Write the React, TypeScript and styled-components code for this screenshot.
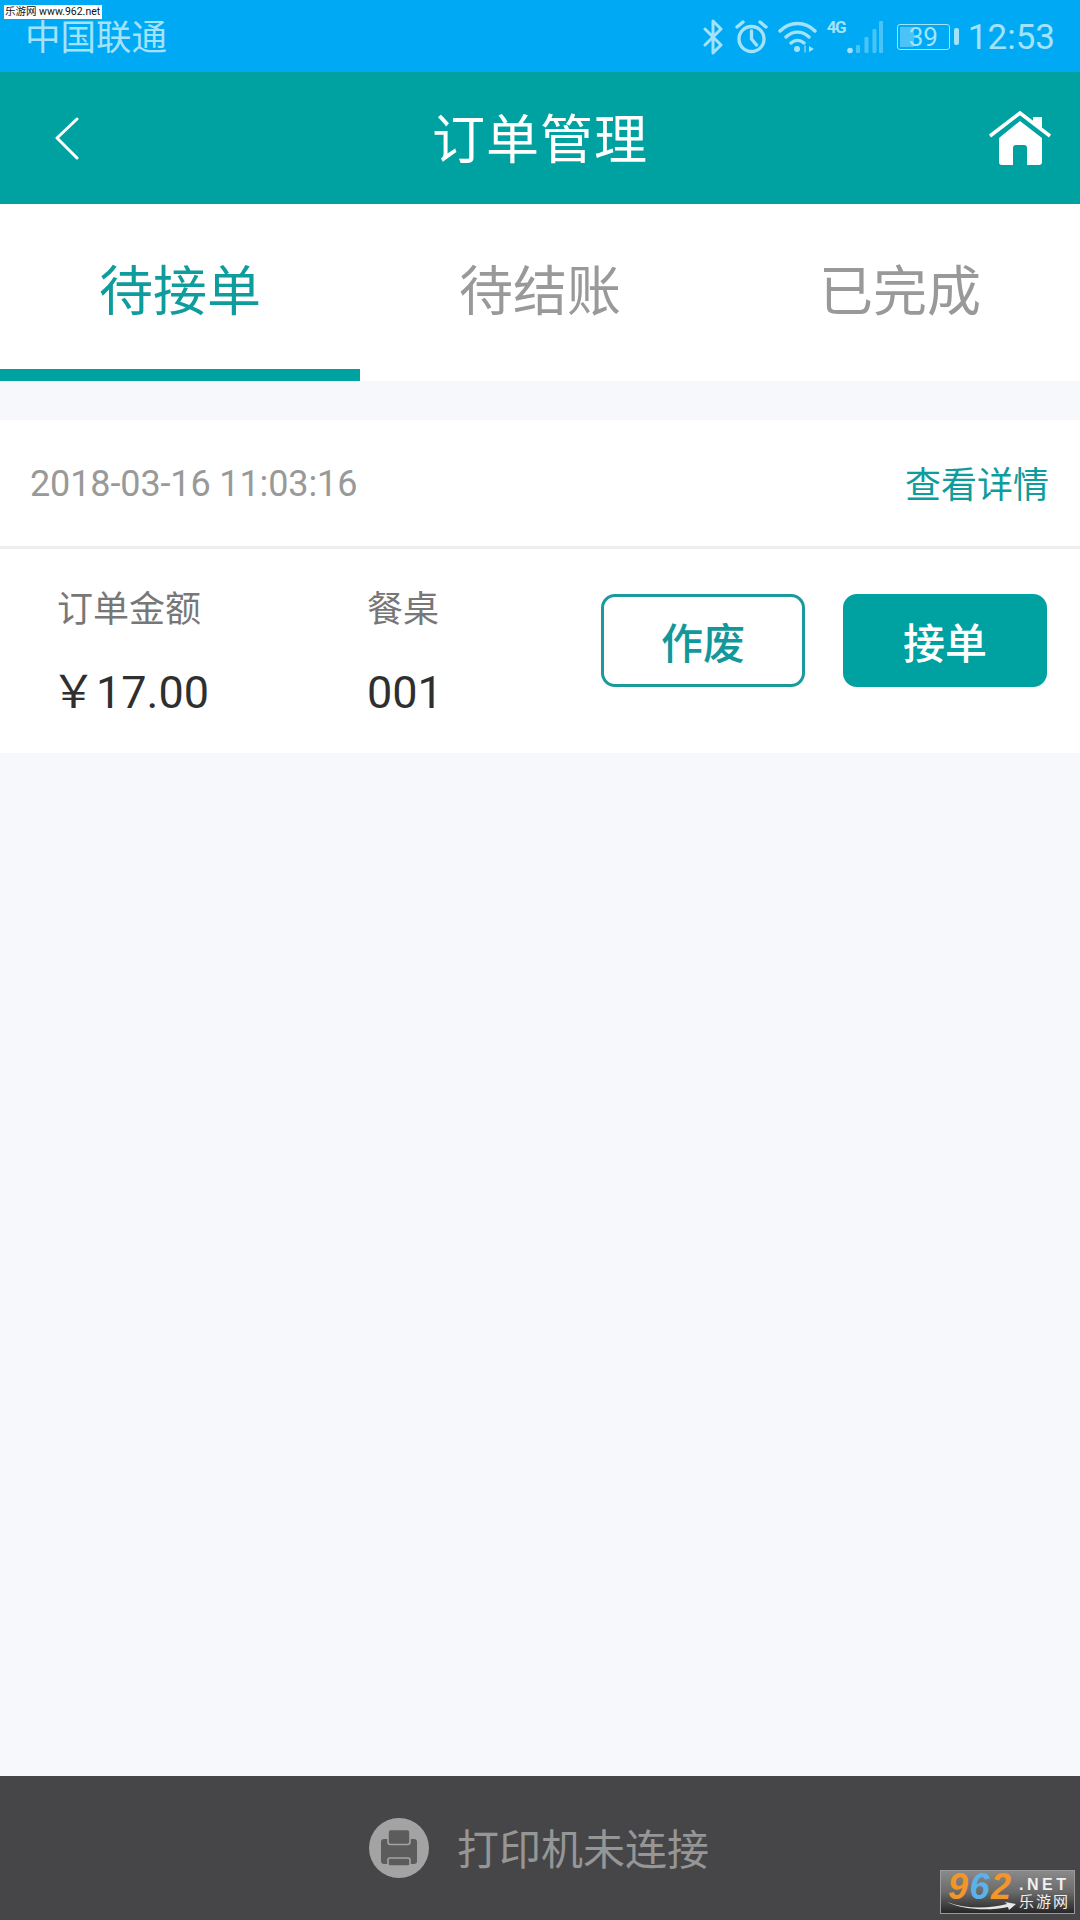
import React from 'react'
import styled, { createGlobalStyle } from 'styled-components'

const TEAL = '#00a1a1'
const STATUS = '#a3e2fb'
const FONT = `Roboto, 'Noto Sans CJK SC', sans-serif`

const GlobalStyle = createGlobalStyle`
  html, body {
    margin: 0;
    padding: 0;
    background: #f6f8fc;
    font-family: ${FONT};
  }
  * { box-sizing: border-box; }
`

const Page = styled.div`
  position: relative;
  display: flex;
  flex-direction: column;
  width: 1080px;
  height: 1920px;
  overflow: hidden;
  background: #f6f8fc;
`

const StatusBar = styled.div`
  display: flex;
  align-items: center;
  justify-content: space-between;
  height: 72px;
  padding: 2px 25px 0 25px;
  background: #00a9f4;
  color: ${STATUS};
`

const Carrier = styled.span`
  padding-top: 3px;
  font-size: 35.5px;
  line-height: 1;
`

const StatusIcons = styled.div`
  display: flex;
  align-items: center;
`

const StatusIcon = styled.svg<{ $gap: number }>`
  display: block;
  margin-right: ${({ $gap }) => $gap}px;
  fill: none;
  stroke: ${STATUS};
`

const NetworkWrap = styled.div`
  position: relative;
  width: 56px;
  height: 36px;
  margin-right: 14px;
`

const NetworkLabel = styled.span`
  position: absolute;
  top: 1px;
  left: 0;
  font-size: 17px;
  font-weight: 700;
  line-height: 14px;
  letter-spacing: -1.5px;
  color: ${STATUS};
`

const SignalBars = styled.svg`
  position: absolute;
  top: 0;
  right: 0;
`

const Battery = styled.div`
  position: relative;
  display: flex;
  align-items: center;
  justify-content: center;
  width: 53px;
  height: 26px;
  border: 1.5px solid ${STATUS};
  border-radius: 3px;
  font-size: 26px;
  line-height: 1;
  color: ${STATUS};

  &::before {
    content: '';
    position: absolute;
    top: 2px;
    bottom: 2px;
    left: 2px;
    width: 14px;
    background: rgba(163, 226, 251, 0.45);
  }
  &::after {
    content: '';
    position: absolute;
    top: 3px;
    right: -10px;
    width: 5px;
    height: 17px;
    border-radius: 2px;
    background: ${STATUS};
  }
`

const Clock = styled.span`
  margin-left: 18px;
  font-size: 35px;
  line-height: 1;
`

const Header = styled.header`
  display: grid;
  grid-template-columns: 1fr auto 1fr;
  align-items: center;
  height: 132px;
  padding: 0 28px;
  background: ${TEAL};
  color: #fff;
`

const Title = styled.h1`
  margin: 0;
  padding-top: 6px;
  font-size: 53px;
  font-weight: 400;
  line-height: 1;
  letter-spacing: 1px;
`

const BackIcon = styled.svg`
  display: block;
  margin-left: 26px;
  fill: none;
  stroke: #fff;
  stroke-width: 3;
  stroke-linecap: round;
  stroke-linejoin: round;
`

const HomeIcon = styled.svg`
  display: block;
  justify-self: end;
`

const Tabs = styled.nav`
  display: flex;
  height: 177px;
  background: #fff;
`

const Tab = styled.div<{ $active?: boolean }>`
  flex: 1;
  padding-top: 57px;
  border-bottom: 12px solid ${({ $active }) => ($active ? TEAL : 'transparent')};
  text-align: center;
  font-size: 54px;
  line-height: 64px;
  color: ${({ $active }) => ($active ? '#0f9c9d' : '#999')};
`

const OrderCard = styled.section`
  margin-top: 39px;
  background: #fff;
`

const OrderTop = styled.div`
  display: flex;
  align-items: center;
  justify-content: space-between;
  height: 129px;
  padding: 0 31px 3px 30px;
  border-bottom: 3px solid #eeeeee;
`

const OrderTime = styled.span`
  margin-top: 5px;
  font-size: 36px;
  letter-spacing: -0.12px;
  color: #999;
`

const DetailLink = styled.span`
  font-size: 36px;
  color: #0f9c9d;
`

const OrderBody = styled.div`
  display: flex;
  align-items: flex-start;
  height: 204px;
  padding: 0 33px 0 57px;
`

const Info = styled.div<{ $width: number }>`
  width: ${({ $width }) => $width}px;
  padding-top: 39px;
`

const InfoLabel = styled.div`
  font-size: 36px;
  line-height: 44px;
  color: #777;
`

const InfoValue = styled.div`
  margin-top: 36px;
  font-size: 45px;
  line-height: 50px;
  color: #2f2f2f;
`

const Yen = styled.span`
  margin-left: -6px;
`

const Actions = styled.div`
  display: flex;
  gap: 38px;
  margin-left: auto;
  padding-top: 45px;
`

const ActionButton = styled.button<{ $solid?: boolean }>`
  width: 204px;
  height: 93px;
  padding: 0;
  border: 3px solid ${({ $solid }) => ($solid ? TEAL : '#1a9a9c')};
  border-radius: 14px;
  background: ${({ $solid }) => ($solid ? TEAL : '#fff')};
  color: ${({ $solid }) => ($solid ? '#fff' : '#12989a')};
  font-family: ${FONT};
  font-size: 42px;
  font-weight: 500;
`

const Spacer = styled.div`
  flex: 1;
`

const PrinterBar = styled.footer`
  display: flex;
  align-items: center;
  justify-content: center;
  gap: 28px;
  height: 144px;
  padding-right: 2px;
  background: #464648;
`

const PrinterBadge = styled.svg`
  display: block;
  width: 60px;
  height: 60px;
`

const PrinterText = styled.span`
  margin-bottom: 4px;
  font-size: 42px;
  color: #969696;
`

const SiteStamp = styled.div`
  position: absolute;
  top: 5px;
  left: 4px;
  width: 98px;
  height: 14px;
  padding-left: 1px;
  background: #fff;
  color: #111;
  font-size: 10.5px;
  line-height: 14px;
  white-space: nowrap;
`

const SiteLogo = styled.div`
  position: absolute;
  right: 5px;
  bottom: 6px;
  display: grid;
  grid-template-columns: 78px 1fr;
  align-items: start;
  width: 135px;
  height: 44px;
  border: 1px solid #9a9a9a;
  background: linear-gradient(#8a8a8a, #6a6a6a 50%, #262626);
`

const LogoDigits = styled.div`
  padding: 0 0 0 7px;
  font-family: 'Liberation Sans', sans-serif;
  font-size: 36px;
  font-style: italic;
  font-weight: 700;
  line-height: 32px;
  letter-spacing: 1.5px;
  color: #f2962a;

  b {
    color: #5bb2ea;
  }
`

const LogoSwoosh = styled.svg`
  position: absolute;
  left: 6px;
  bottom: 2px;
`

const LogoSide = styled.div`
  padding-top: 6px;
  color: #f0f0f0;
  white-space: nowrap;
`

const LogoNet = styled.div`
  font-family: 'Liberation Sans', sans-serif;
  font-size: 16px;
  font-weight: 700;
  line-height: 16px;
  letter-spacing: 3.5px;
`

const LogoName = styled.div`
  font-size: 15px;
  line-height: 19px;
  letter-spacing: 2px;
`

const Bluetooth = () => (
  <StatusIcon $gap={12} width="20" height="36" viewBox="0 0 20 36" strokeWidth="3" strokeLinecap="round" strokeLinejoin="round">
    <path d="M2 10 18 26 10 34V2l8 8L2 26" />
  </StatusIcon>
)

const Alarm = () => (
  <StatusIcon $gap={10} width="33" height="34" viewBox="0 0 33 34" strokeWidth="3.4" strokeLinecap="round" strokeLinejoin="round">
    <circle cx="16.5" cy="19" r="12.5" />
    <path d="M16.5 11v8l5 6M2 7l6-5M31 7l-6-5" />
  </StatusIcon>
)

const Wifi = () => (
  <StatusIcon $gap={10} width="39" height="34" viewBox="0 0 39 34" strokeWidth="3.4" strokeLinecap="round">
    <path d="M2 11c10-10 25-10 35 0M8 17c7-6.5 16-6.5 23 0M13 23c4-3.5 9-3.5 13 0" />
    <circle cx="19" cy="29" r="3" fill={STATUS} stroke="none" />
    <path d="M31 26v6l5-3z" fill={STATUS} stroke="none" />
    <path d="M27 26v6" strokeWidth="1.6" opacity="0.7" />
  </StatusIcon>
)

const Signal = () => (
  <SignalBars width="36" height="36" viewBox="0 0 36 36">
    <circle cx="3" cy="31.5" r="2.8" fill={STATUS} />
    {[9, 17.5, 25.5, 32].map((x, i) => (
      <rect key={x} x={x} y={26 - i * 8} width="4" height={8 + i * 8} rx="1" fill={STATUS} opacity="0.45" />
    ))}
  </SignalBars>
)

const App: React.FC = () => (
  <Page>
    <GlobalStyle />
    <StatusBar>
      <Carrier>中国联通</Carrier>
      <StatusIcons>
        <Bluetooth />
        <Alarm />
        <Wifi />
        <NetworkWrap>
          <NetworkLabel>4G</NetworkLabel>
          <Signal />
        </NetworkWrap>
        <Battery>39</Battery>
        <Clock>12:53</Clock>
      </StatusIcons>
    </StatusBar>
    <Header>
      <BackIcon width="26" height="44" viewBox="0 0 26 44">
        <path d="M23 3 3 22l20 20" />
      </BackIcon>
      <Title>订单管理</Title>
      <HomeIcon width="64" height="56" viewBox="0 0 64 56">
        <path d="M2 26 32 3l30 23" fill="none" stroke="#fff" strokeWidth="3.5" />
        <path d="M45 7h9v12l-9-7z" fill="#fff" />
        <path d="M32 11 54 28v24a3 3 0 0 1-3 3H39V38a3 3 0 0 0-3-3h-8a3 3 0 0 0-3 3v17H14a3 3 0 0 1-3-3V28z" fill="#fff" />
      </HomeIcon>
    </Header>
    <Tabs>
      <Tab $active>待接单</Tab>
      <Tab>待结账</Tab>
      <Tab>已完成</Tab>
    </Tabs>
    <OrderCard>
      <OrderTop>
        <OrderTime>2018-03-16 11:03:16</OrderTime>
        <DetailLink>查看详情</DetailLink>
      </OrderTop>
      <OrderBody>
        <Info $width={310}>
          <InfoLabel>订单金额</InfoLabel>
          <InfoValue>
            <Yen>￥</Yen>17.00
          </InfoValue>
        </Info>
        <Info $width={120}>
          <InfoLabel>餐桌</InfoLabel>
          <InfoValue>001</InfoValue>
        </Info>
        <Actions>
          <ActionButton>作废</ActionButton>
          <ActionButton $solid>接单</ActionButton>
        </Actions>
      </OrderBody>
    </OrderCard>
    <Spacer />
    <PrinterBar>
      <PrinterBadge viewBox="0 0 60 60">
        <circle cx="30" cy="30" r="30" fill="#a3a3a3" />
        <rect x="12" y="21" width="36" height="25" rx="3" fill="#5c5c5c" />
        <rect x="19" y="11.5" width="22" height="15" rx="2.5" fill="#5c5c5c" stroke="#a3a3a3" strokeWidth="1.6" />
        <rect x="19" y="40" width="22" height="8" rx="2" fill="#5c5c5c" stroke="#a3a3a3" strokeWidth="1.6" />
      </PrinterBadge>
      <PrinterText>打印机未连接</PrinterText>
    </PrinterBar>
    <SiteStamp>乐游网 www.962.net</SiteStamp>
    <SiteLogo>
      <LogoDigits>
        9<b>6</b>2
      </LogoDigits>
      <LogoSide>
        <LogoNet>.NET</LogoNet>
        <LogoName>乐游网</LogoName>
      </LogoSide>
      <LogoSwoosh width="70" height="10" viewBox="0 0 70 10">
        <path d="M0 1c18 7 42 7 60 2l-2-2 11 2-7 6-1-3C42 10 16 9 0 1z" fill="#e8e8e8" />
      </LogoSwoosh>
    </SiteLogo>
  </Page>
)

export default App
